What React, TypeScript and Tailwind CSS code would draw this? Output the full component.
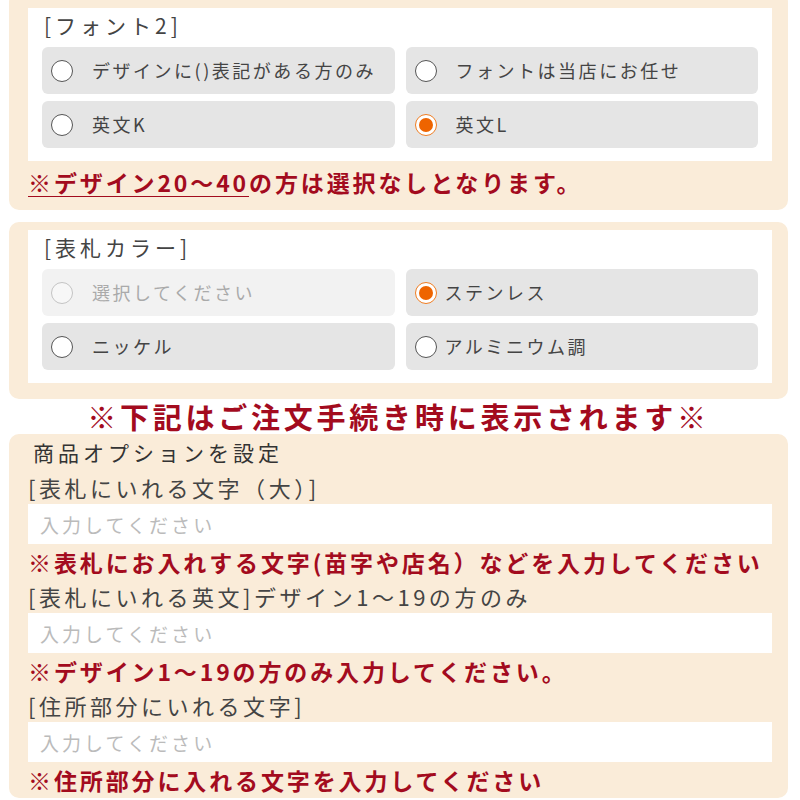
import React from "react";

type Option = { label: string; checked?: boolean; disabled?: boolean; tight?: boolean };

const FONT_OPTIONS: Option[] = [
    { label: "デザインに()表記がある方のみ" },
    { label: "フォントは当店にお任せ" },
    { label: "英文K" },
    { label: "英文L", checked: true },
];

const COLOR_OPTIONS: Option[] = [
    { label: "選択してください", disabled: true },
    { label: "ステンレス", checked: true, tight: true },
    { label: "ニッケル" },
    { label: "アルミニウム調", tight: true },
];

function Radio({ checked, disabled }: { checked?: boolean; disabled?: boolean }) {
    if (checked) {
        return (
            <span className="flex h-[22px] w-[22px] shrink-0 items-center justify-center rounded-full border border-[#ef7d22] bg-white">
                <span className="h-[14px] w-[14px] rounded-full bg-[#ee6400]" />
            </span>
        );
    }
    return (
        <span
            className={
                disabled
                    ? "h-[22px] w-[22px] shrink-0 rounded-full border border-[#c4c4c4] bg-[#f7f7f7]"
                    : "h-[22px] w-[22px] shrink-0 rounded-full border border-[#555] bg-white"
            }
        />
    );
}

function OptionPanel({ title, options }: { title: string; options: Option[] }) {
    return (
        <div className="bg-white px-[14px] pb-[13px]">
            <div className="h-[35px] pl-[2px] text-[21px] leading-[35px] tracking-[0.19em] text-[#444]">{title}</div>
            <div className="mt-[4px] grid grid-cols-2 gap-x-[11px] gap-y-[7px]">
                {options.map((opt) => (
                    <div
                        key={opt.label}
                        className={
                            opt.disabled
                                ? "flex h-[47px] items-center rounded-[6px] bg-[#f2f2f2] pl-[9px] text-[#aaa]"
                                : "flex h-[47px] items-center rounded-[6px] bg-[#e5e5e5] pl-[9px] text-[#444]"
                        }
                    >
                        <Radio checked={opt.checked} disabled={opt.disabled} />
                        <span
                            className={
                                opt.tight
                                    ? "ml-[8px] text-[18px] tracking-[0.14em]"
                                    : "ml-[19px] text-[18px] tracking-[0.14em]"
                            }
                        >
                            {opt.label}
                        </span>
                    </div>
                ))}
            </div>
        </div>
    );
}

function Note({ children }: { children: React.ReactNode }) {
    return (
        <div className="h-[36px] whitespace-nowrap text-[23px] font-bold leading-[36px] tracking-[0.125em] text-[#a30b1e]">
            <span className="font-normal">※</span>
            {children}
        </div>
    );
}

function TextField({ label, note }: { label: string; note: React.ReactNode }) {
    return (
        <div>
            <div className="h-[33px] text-[22px] leading-[33px] tracking-[0.16em] text-[#444]">{label}</div>
            <input
                className="block h-[40px] w-full bg-white pl-[12px] text-[19px] tracking-[0.16em] outline-none placeholder:text-[#bbb]"
                placeholder="入力してください"
            />
            <Note>{note}</Note>
        </div>
    );
}

export default function App() {
    return (
        <div className="w-[800px] h-[800px] overflow-hidden bg-white pl-[9px] pr-[12px] font-['Noto_Sans_CJK_JP',sans-serif]">
            {/* フォント2 */}
            <div className="-mt-[8px] rounded-[10px] bg-[#faecd9] pl-[19px] pr-[16px] pt-[16px] pb-[13px]">
                <OptionPanel title="[フォント2]" options={FONT_OPTIONS} />
                <div className="whitespace-nowrap pt-[7px] text-[23px] font-bold leading-[28px] tracking-[0.125em] text-[#a30b1e]">
                    <span className="inline-block border-b border-[#a30b1e] align-top leading-[28px]">
                        <span className="font-normal">※</span>デザイン20〜40
                    </span>
                    <span className="align-top leading-[28px]">の方は選択なしとなります。</span>
                </div>
            </div>

            {/* 表札カラー */}
            <div className="mt-[12px] rounded-[10px] bg-[#faecd9] pl-[19px] pr-[16px] pt-[8px] pb-[16px]">
                <OptionPanel title="[表札カラー]" options={COLOR_OPTIONS} />
            </div>

            <div className="h-[35px] whitespace-nowrap text-center text-[29px] font-bold leading-[35px] tracking-[0.13em] text-[#a30b1e]">
                <span className="font-normal">※</span>下記はご注文手続き時に表示されます<span className="font-normal">※</span>
            </div>

            {/* 商品オプション */}
            <div className="rounded-[10px] bg-[#faecd9] pl-[19px] pr-[16px] pt-[2px]">
                <div className="h-[32px] pl-[5px] text-[21px] leading-[32px] tracking-[0.19em] text-[#333]">商品オプションを設定</div>
                <div className="pt-[3px]">
                    <TextField label="[表札にいれる文字（大）]" note="表札にお入れする文字(苗字や店名）などを入力してください" />
                    <TextField label="[表札にいれる英文]デザイン1〜19の方のみ" note="デザイン1〜19の方のみ入力してください。" />
                    <TextField label="[住所部分にいれる文字]" note="住所部分に入れる文字を入力してください" />
                </div>
            </div>
        </div>
    );
}
